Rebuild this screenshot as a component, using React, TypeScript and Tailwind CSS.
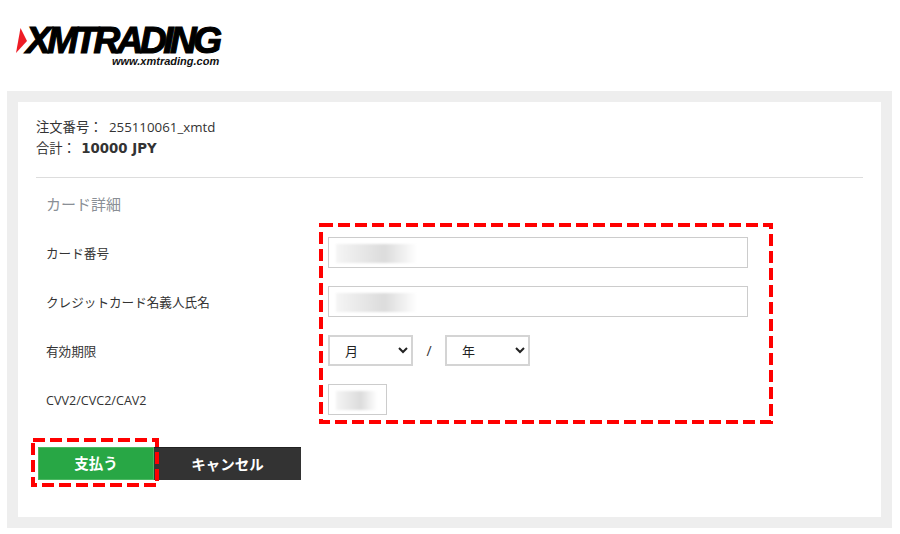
import React from "react";

const BODY_FONT = { fontFamily: '"Open Sans", "Noto Sans CJK JP", sans-serif' };

function Logo() {
  return (
    <div className="relative h-[91px]">
      <div className="absolute left-[16px] top-[27px] flex items-center">
        <svg width="11" height="26" viewBox="0 0 11 26">
          <polygon points="4.5,0 11,13 0,25 " fill="#ee1c25" />
        </svg>
        <span
          className="ml-[-1px] text-[37px] leading-[27px] font-bold italic tracking-[-3.5px] text-black [-webkit-text-stroke:1.2px_#000]"
          style={{ fontFamily: '"Liberation Sans", sans-serif' }}
        >
          XMTRADING
        </span>
      </div>
      <span
        className="absolute left-[112px] top-[55px] text-[11px] leading-[13px] font-bold italic text-[#111]"
        style={{ fontFamily: '"Liberation Sans", sans-serif' }}
      >
        www.xmtrading.com
      </span>
    </div>
  );
}

// blurred-out value sitting on top of a field
function Blurred({ width, left }: { width: number; left: number }) {
  return (
    <div
      className="absolute top-[7px] h-[19px] bg-gradient-to-r from-[#f5f5f5] via-[#dcdcdc] via-60% to-white blur-[1px]"
      style={{ width, left }}
    />
  );
}

function TextField({ width, blur, blurLeft = 8 }: { width: number; blur: number; blurLeft?: number }) {
  return (
    <div className="relative h-[31px]" style={{ width }}>
      <input className="h-full w-full border border-[#ccc] bg-white px-2 outline-none" />
      <Blurred width={blur} left={blurLeft} />
    </div>
  );
}

function MonthYear({ label }: { label: string }) {
  return (
    <select className="h-[31px] w-[85px] border-2 border-[#d4d4d4] bg-white pl-[11px] text-[13px] text-[#222]">
      <option>{label}</option>
    </select>
  );
}

function Row({ label, children }: { label: string; children: React.ReactNode }) {
  return (
    <div className="flex h-[31px] items-center">
      <div className="w-[292px] pl-[10px] pt-[2px] text-[12.6px] leading-[18px] text-[#333]">{label}</div>
      {children}
    </div>
  );
}

function DashedFrame({ className, width, height }: { className: string; width: number; height: number }) {
  return (
    <svg className={`pointer-events-none absolute ${className}`} width={width} height={height}>
      <rect
        x="2"
        y="2"
        width={width - 4}
        height={height - 4}
        fill="none"
        stroke="#ff0000"
        strokeWidth="4"
        strokeDasharray="12 5"
      />
    </svg>
  );
}

export default function App() {
  return (
    <div className="relative h-[534px] w-[900px] overflow-hidden bg-white" style={BODY_FONT}>
      <Logo />

      <div className="mx-[7px] h-[437px] w-[885px] border-[11px] border-[#eeeeee] bg-white px-[18px] pt-[15px]">
        <div className="text-[13.3px] leading-[21px] text-[#333]">
          <div>
            注文番号： <span className="ml-[3px]">255110061_xmtd</span>
          </div>
          <div>
            合計：{" "}
            <b className="ml-[2px] font-bold" style={{ fontFamily: '"DejaVu Sans", sans-serif' }}>
              10000 JPY
            </b>
          </div>
        </div>

        <div className="mt-[18px] border-t border-[#dddddd] pt-[15px]">
          <div className="pl-[10px] text-[15px] leading-[22px] text-[#8a8f96]">カード詳細</div>

          <div className="mt-[22px] flex flex-col gap-[18px]">
            <Row label="カード番号">
              <TextField width={420} blur={81} />
            </Row>
            <Row label="クレジットカード名義人氏名">
              <TextField width={420} blur={81} />
            </Row>
            <Row label="有効期限">
              <div className="flex items-center">
                <MonthYear label="月" />
                <span className="w-[32px] text-center text-[14px] text-[#333]">/</span>
                <MonthYear label="年" />
              </div>
            </Row>
            <Row label="CVV2/CVC2/CAV2">
              <TextField width={59} blur={41} />
            </Row>
          </div>

          <div className="mt-[32px] flex pl-[2px] text-[14.5px] font-bold text-white">
            <button className="h-[33px] w-[116px] border border-[#4cb963] bg-[#28a745] pt-[1px]">支払う</button>
            <button className="h-[33px] w-[147px] border-t border-[#222] bg-[#333333] pt-[1px]">キャンセル</button>
          </div>
        </div>
      </div>

      <DashedFrame className="left-[319px] top-[223px]" width={454} height={201} />
      <DashedFrame className="left-[31px] top-[438px]" width={128} height={49} />
    </div>
  );
}
